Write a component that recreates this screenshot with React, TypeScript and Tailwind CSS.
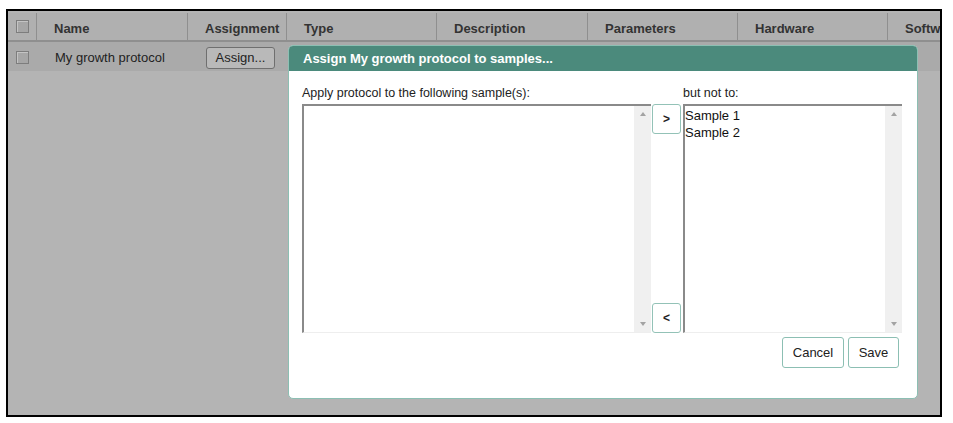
import React from "react";

const columns = [
  { label: "Name", w: "w-[151px]" },
  { label: "Assignment", w: "w-[99px]" },
  { label: "Type", w: "w-[150px]" },
  { label: "Description", w: "w-[151px]" },
  { label: "Parameters", w: "w-[150px]" },
  { label: "Hardware", w: "w-[150px]" },
  { label: "Software", w: "w-[150px]" },
];

function Check() {
  return (
    <span className="block h-[13px] w-[13px] border border-[#7d7d7d] bg-[#a6a6a6] shadow-[inset_1px_1px_0_#c4c4c4]" />
  );
}

function Scrollbar() {
  return (
    <div className="flex w-[17px] shrink-0 flex-col items-center justify-between bg-[#f0f0f0] py-[6px]">
      <span className="h-0 w-0 border-x-[3px] border-b-[4px] border-x-transparent border-b-[#a3a3a3]" />
      <span className="h-0 w-0 border-x-[3px] border-t-[4px] border-x-transparent border-t-[#a3a3a3]" />
    </div>
  );
}

function ListBox({ items, width }: { items: string[]; width: string }) {
  return (
    <div
      className={`flex h-[229px] ${width} border-l-2 border-t-2 border-b border-l-[#8a8a8a] border-t-[#8a8a8a] border-b-[#eeeeee] bg-white`}
    >
      <div className="flex-1 pt-[1px] text-[13px] leading-[17px] text-[#111]">
        {items.map((s) => (
          <div key={s}>{s}</div>
        ))}
      </div>
      <Scrollbar />
    </div>
  );
}

function MoveButton({ label }: { label: string }) {
  return (
    <button className="flex h-[30px] w-[29px] items-center justify-center rounded-[3px] border border-[#93c2b7] bg-white text-[12px] font-bold text-[#222]">
      {label}
    </button>
  );
}

export default function App() {
  return (
    <div className="h-[423px] w-[953px] bg-white pl-[6px] pt-[9px] font-['Liberation_Sans',Arial,sans-serif]">
      <div className="relative h-[408px] w-[936px] overflow-hidden border-2 border-black bg-[#b4b4b4]">
        <div className="mt-[2px] flex h-[29px] w-[1200px] border-b-2 border-[#8f8f8f] bg-[#b0b0b0] text-[13px] font-bold text-[#333]">
          <div className="flex w-[29px] items-center justify-center border-r border-[#8f8f8f]">
            <Check />
          </div>
          {columns.map((c) => (
            <div
              key={c.label}
              className={`flex ${c.w} items-center border-r border-[#8f8f8f] pl-[17px] pt-[5px]`}
            >
              {c.label}
            </div>
          ))}
        </div>
        <div className="flex h-[29px] w-[1200px] items-center bg-[#aaaaaa] pt-[2px] text-[13px] text-[#222]">
          <div className="flex w-[29px] justify-center">
            <Check />
          </div>
          <div className="w-[151px] pl-[18px]">My growth protocol</div>
          <div className="w-[99px] pl-[18px]">
            <button className="h-[22px] w-[69px] rounded-[3px] border border-[#6f6f6f] bg-[#b9b9b9] text-[13px] text-[#222]">
              Assign...
            </button>
          </div>
        </div>

        <div className="absolute left-[280px] top-[34px] flex h-[354px] w-[630px] flex-col overflow-hidden rounded-[5px] border border-[#8cbfb3] bg-white">
          <div className="flex h-[25px] items-center bg-[#4b8a7c] pl-[14px] text-[13px] font-bold text-white">
            Assign My growth protocol to samples...
          </div>
          <div className="px-[13px] pt-[15px] text-[12.5px] text-[#222]">
            <div className="flex">
              <div className="w-[381px] leading-[15px]">Apply protocol to the following sample(s):</div>
              <div className="leading-[15px]">but not to:</div>
            </div>
            <div className="mt-[3px] flex">
              <ListBox items={[]} width="w-[349px]" />
              <div className="ml-[1px] flex w-[30px] flex-col justify-between">
                <MoveButton label=">" />
                <MoveButton label="<" />
              </div>
              <div className="ml-[1px]">
                <ListBox items={["Sample 1", "Sample 2"]} width="w-[219px]" />
              </div>
            </div>
            <div className="mt-[4px] flex justify-end gap-[4px] pr-[5px]">
              <button className="h-[31px] w-[62px] rounded-[3px] border border-[#8cbfb3] bg-white text-[13px] text-[#222]">
                Cancel
              </button>
              <button className="h-[31px] w-[51px] rounded-[3px] border border-[#8cbfb3] bg-white text-[13px] text-[#222]">
                Save
              </button>
            </div>
          </div>
        </div>
      </div>
    </div>
  );
}
